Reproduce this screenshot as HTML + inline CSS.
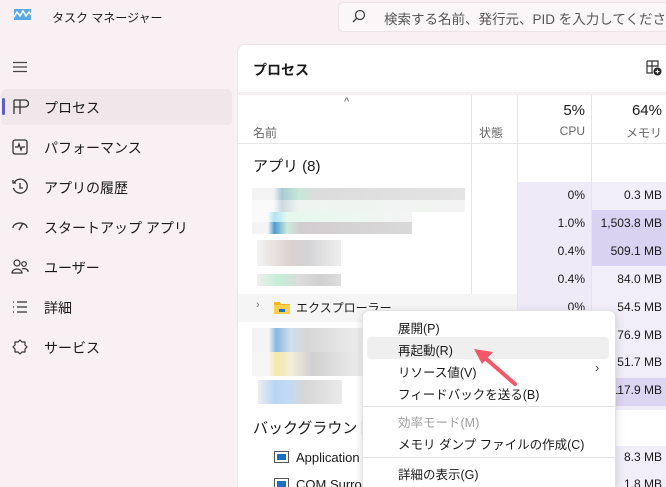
<!DOCTYPE html>
<html style="width:666px;height:487px;overflow:hidden"><head><meta charset="utf-8"><style>
*{margin:0;padding:0;box-sizing:border-box}
body{width:666px;height:487px;overflow:hidden;background:#f8f0f2;font-family:"Liberation Sans","Noto Sans CJK JP",sans-serif;color:#1a1a1a;position:relative;font-size:13px}
.a{position:absolute;white-space:nowrap}
.nav{left:44px;font-size:14px}
.ic{left:11px;width:18px;height:18px}
.r{text-align:right;font-size:12px}
.mi{left:398px;font-size:12.5px}
</style></head><body>
<svg class="a" style="left:14px;top:9px" width="17" height="11"><rect width="17" height="11" fill="#5aa8e8"/><path d="M0 8 L3 3 L6 7 L9 2 L12 7 L15 3 L17 6" stroke="#fff" stroke-width="1.5" fill="none"/></svg>
<div class="a" style="left:52px;top:9px;font-size:12px">タスク マネージャー</div>
<div class="a" style="left:338px;top:2px;width:340px;height:30px;background:#fbf7f8;border:1px solid #ece4e6;border-radius:5px"></div>
<svg class="a" style="left:352px;top:9px" width="14" height="14"><circle cx="8" cy="6" r="4.5" stroke="#444" stroke-width="1.3" fill="none"/><path d="M5 9 L1 13" stroke="#444" stroke-width="1.4"/></svg>
<div class="a" style="left:384px;top:8px;font-size:13.5px;color:#555">検索する名前、発行元、PID を入力してください</div>
<svg class="a" style="left:12px;top:61px" width="16" height="12"><path d="M1 1.5H15M1 6H15M1 10.5H15" stroke="#444" stroke-width="1.2"/></svg>
<div class="a" style="left:1px;top:89px;width:231px;height:36px;background:#efe7e9;border-radius:5px"></div>
<div class="a" style="left:2px;top:98px;width:3px;height:17px;background:#5b5fc7;border-radius:2px"></div>
<svg class="a ic" style="top:98px"><path d="M3 2H14A3 3 0 0 1 14 9H9M3 2V16M3 9H9M9 2V16" stroke="#333" stroke-width="1.3" fill="none"/></svg>
<div class="a nav" style="top:98px">プロセス</div>
<svg class="a ic" style="top:138px"><rect x="2" y="2" width="14" height="14" rx="2" stroke="#333" stroke-width="1.3" fill="none"/><path d="M4 9H7L8 6L10 12L11 9H14" stroke="#333" stroke-width="1.2" fill="none"/></svg>
<div class="a nav" style="top:138px">パフォーマンス</div>
<svg class="a ic" style="top:178px"><path d="M3 5A7 7 0 1 1 2.5 10" stroke="#333" stroke-width="1.3" fill="none"/><path d="M9 5V10H12M2 2V5H5" stroke="#333" stroke-width="1.3" fill="none"/></svg>
<div class="a nav" style="top:178px">アプリの履歴</div>
<svg class="a ic" style="top:218px"><path d="M2 10A7 5 0 0 1 16 10M8 12L12 5" stroke="#333" stroke-width="1.3" fill="none"/></svg>
<div class="a nav" style="top:218px">スタートアップ アプリ</div>
<svg class="a ic" style="top:258px"><circle cx="6" cy="5" r="3" stroke="#333" stroke-width="1.2" fill="none"/><circle cx="13" cy="6" r="2.3" stroke="#333" stroke-width="1.2" fill="none"/><path d="M1 15A5 4 0 0 1 11 15ZM11 11A4 3 0 0 1 17 14" stroke="#333" stroke-width="1.2" fill="none"/></svg>
<div class="a nav" style="top:258px">ユーザー</div>
<svg class="a ic" style="top:298px"><path d="M2 4H3M2 9H3M2 14H3M6 4H16M6 9H16M6 14H16" stroke="#333" stroke-width="1.3"/></svg>
<div class="a nav" style="top:298px">詳細</div>
<svg class="a ic" style="top:338px"><path d="M9 2L11 4L14 4L14 7L16 9L14 11L14 14L11 14L9 16L7 14L4 14L4 11L2 9L4 7L4 4L7 4Z" stroke="#333" stroke-width="1.2" fill="none" stroke-linejoin="round"/></svg>
<div class="a nav" style="top:338px">サービス</div>
<div class="a" style="left:237px;top:44px;width:430px;height:443px;background:#fff;border:1px solid #ece6e8;border-bottom:none;border-right:none;border-radius:8px 0 0 0"></div>
<div class="a" style="left:238px;top:92px;width:428px;height:3px;background:#f6f0f2"></div>
<div class="a" style="left:253px;top:60px;font-size:14px;font-weight:bold">プロセス</div>
<svg class="a" style="left:646px;top:60px" width="16" height="16"><path d="M1 1H12V7M1 1V13H7M1 6H12M6 1V13" stroke="#333" stroke-width="1.2" fill="none"/><circle cx="11.5" cy="11.5" r="4" fill="#222"/><path d="M11.5 9.5V13.5M9.5 11.5H13.5" stroke="#fff" stroke-width="1.2"/></svg>
<div class="a" style="left:471px;top:95px;width:1px;height:392px;background:#e6e6e6"></div>
<div class="a" style="left:517px;top:95px;width:1px;height:392px;background:#e6e6e6"></div>
<div class="a" style="left:591px;top:95px;width:1px;height:392px;background:#e6e6e6"></div>
<div class="a" style="left:238px;top:143px;width:428px;height:1px;background:#e6e6e6"></div>
<div class="a" style="left:344px;top:96px;font-size:11px;color:#666">^</div>
<div class="a" style="left:253px;top:124px;font-size:12px;color:#666">名前</div>
<div class="a" style="left:479px;top:124px;font-size:12px;color:#666">状態</div>
<div class="a r" style="left:517px;width:68px;top:102px;font-size:15px">5%</div>
<div class="a r" style="left:517px;width:68px;top:124px;color:#666">CPU</div>
<div class="a r" style="left:592px;width:70px;top:102px;font-size:15px">64%</div>
<div class="a r" style="left:592px;width:70px;top:124px;color:#666">メモリ</div>
<div class="a" style="left:253px;top:155px;font-size:15px">アプリ (8)</div>
<div class="a" style="left:518px;top:182px;width:73px;height:228px;background:#eeeaf8"></div>
<div class="a" style="left:592px;top:182px;width:74px;height:228px;background:#f1eefa"></div>
<div class="a" style="left:592px;top:210px;width:74px;height:56px;background:#d9d2f0"></div>
<div class="a" style="left:592px;top:378px;width:74px;height:28px;background:#dcd5f1"></div>
<div class="a" style="left:518px;top:446px;width:148px;height:41px;background:#f1eefa"></div>
<div class="a" style="left:238px;top:294px;width:279px;height:28px;background:#f5f5f5"></div>
<div class="a" style="left:252px;top:188px;width:213px;height:12px;background:linear-gradient(90deg,#f4f4f4 10%,#a9cbd6 14%,#c6e8d6 22%,#dcdcdc 30%,#e4e4e4)"></div>
<div class="a" style="left:252px;top:200px;width:213px;height:12px;background:linear-gradient(90deg,#fafafa 10%,#cdd9e0 14%,#eef5f0 22%,#f3f3f3)"></div>
<div class="a" style="left:252px;top:212px;width:160px;height:10px;background:linear-gradient(90deg,#fafafa 10%,#aee3f2 14%,#e5f8ee 22%,#f4f4f4)"></div>
<div class="a" style="left:252px;top:222px;width:160px;height:12px;background:linear-gradient(90deg,#f4f4f4 10%,#4e9bd0 14%,#cfe8da 22%,#d2cdd0 30%,#d9d9d9)"></div>
<div class="a" style="left:257px;top:240px;width:84px;height:26px;background:linear-gradient(90deg,#f3f3f3,#dcd1cf 40%,#d4d4d6 60%,#eeeeee)"></div>
<div class="a" style="left:257px;top:274px;width:84px;height:12px;background:linear-gradient(90deg,#eee,#c3f0d6 25%,#dcdcdc 50%,#d0d0d0 75%,#ddd)"></div>
<div class="a" style="left:252px;top:328px;width:110px;height:24px;background:linear-gradient(90deg,#f4f4f4 15%,#86b8e0 22%,#cfdfec 35%,#d6d6d6 50%,#eee)"></div>
<div class="a" style="left:252px;top:352px;width:110px;height:24px;background:linear-gradient(90deg,#f6f6f6 15%,#f6e7a9 22%,#f3eed9 35%,#d0d0d0 55%,#eee)"></div>
<div class="a" style="left:258px;top:380px;width:84px;height:24px;background:linear-gradient(90deg,#eee,#b7d6f3 20%,#c1d9f6 35%,#d6d6d6 55%,#eaeaea)"></div>
<div class="a r" style="left:518px;width:67px;top:188px">0%</div><div class="a r" style="left:592px;width:70px;top:188px">0.3 MB</div>
<div class="a r" style="left:518px;width:67px;top:216px">1.0%</div><div class="a r" style="left:592px;width:70px;top:216px">1,503.8 MB</div>
<div class="a r" style="left:518px;width:67px;top:244px">0.4%</div><div class="a r" style="left:592px;width:70px;top:244px">509.1 MB</div>
<div class="a r" style="left:518px;width:67px;top:272px">0.4%</div><div class="a r" style="left:592px;width:70px;top:272px">84.0 MB</div>
<div class="a r" style="left:518px;width:67px;top:300px">0%</div><div class="a r" style="left:592px;width:70px;top:300px">54.5 MB</div>
<div class="a r" style="left:592px;width:70px;top:328px">76.9 MB</div>
<div class="a r" style="left:592px;width:70px;top:355px">51.7 MB</div>
<div class="a r" style="left:592px;width:70px;top:383px">117.9 MB</div>
<div class="a r" style="left:592px;width:70px;top:450px">8.3 MB</div>
<div class="a r" style="left:592px;width:70px;top:477px">1.8 MB</div>
<div class="a" style="left:256px;top:299px;font-size:11px;color:#777">›</div>
<svg class="a" style="left:274px;top:300px" width="16" height="14"><path d="M0 2H6L7 4H16V14H0Z" fill="#f5b824"/><rect x="0" y="5" width="16" height="9" fill="#fcd04d"/><rect x="5" y="9" width="6" height="3" fill="#1a73c8"/></svg>
<div class="a" style="left:296px;top:299px;font-size:12px">エクスプローラー</div>
<div class="a" style="left:253px;top:417px;font-size:15px">バックグラウンド プ</div>
<svg class="a" style="left:274px;top:451px" width="15" height="12"><rect x="0.5" y="0.5" width="14" height="11" fill="#fff" stroke="#555"/><rect x="3" y="3" width="9" height="6" fill="#1a6fc4"/></svg>
<div class="a" style="left:296px;top:450px;font-size:13px">Application</div>
<svg class="a" style="left:274px;top:478px" width="15" height="12"><rect x="0.5" y="0.5" width="14" height="11" fill="#fff" stroke="#555"/><rect x="3" y="3" width="9" height="6" fill="#1a6fc4"/></svg>
<div class="a" style="left:296px;top:477px;font-size:13px">COM Surrog</div>
<div class="a" style="left:362px;top:310px;width:254px;height:177px;background:#fff;border:1px solid #e2e2e2;border-bottom:none;border-radius:7px 7px 0 0;box-shadow:0 3px 10px rgba(0,0,0,.15)"></div>
<div class="a" style="left:367px;top:337px;width:242px;height:22px;background:#efefef;border-radius:4px"></div>
<div class="a mi" style="top:318px">展開(P)</div>
<div class="a mi" style="top:340px">再起動(R)</div>
<div class="a mi" style="top:362px">リソース値(V)</div>
<div class="a" style="left:595px;top:360px;font-size:13px;color:#444">›</div>
<div class="a mi" style="top:384px">フィードバックを送る(B)</div>
<div class="a" style="left:363px;top:406px;width:252px;height:1px;background:#e2e2e2"></div>
<div class="a mi" style="top:412px;color:#a0a0a0">効率モード(M)</div>
<div class="a mi" style="top:434px">メモリ ダンプ ファイルの作成(C)</div>
<div class="a" style="left:363px;top:457px;width:252px;height:1px;background:#e2e2e2"></div>
<div class="a mi" style="top:464px">詳細の表示(G)</div>
<svg class="a" style="left:460px;top:340px" width="70" height="52"><path d="M55 44 L24 17" stroke="#f2576a" stroke-width="4" stroke-linecap="round"/><path d="M14 9 L33 12 L22 24 Z" fill="#f2576a"/></svg>
</body></html>
